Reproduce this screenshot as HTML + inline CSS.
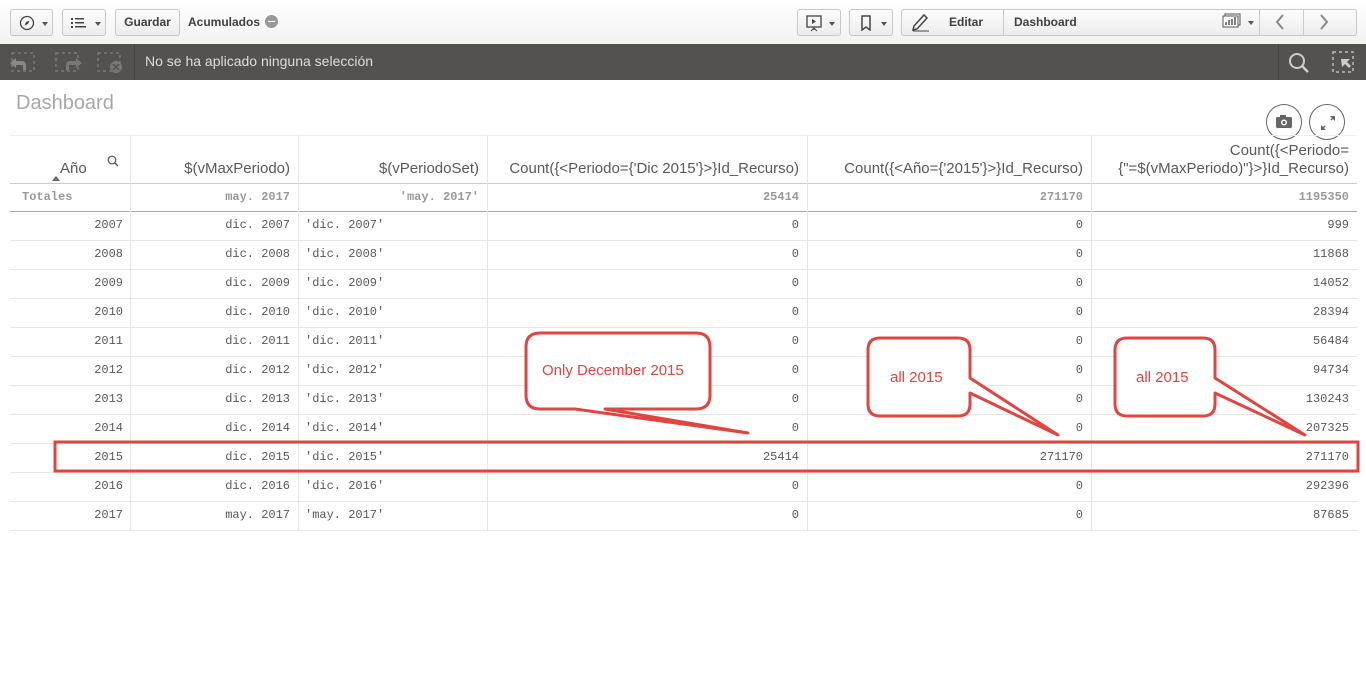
<!DOCTYPE html>
<html><head><meta charset="utf-8"><style>
*{box-sizing:border-box;margin:0;padding:0}
body{width:1366px;height:681px;background:#fff;font-family:"Liberation Sans",sans-serif;position:relative;overflow:hidden}
.a{position:absolute}
.btn{position:absolute;top:9px;height:27px;border:1px solid #c8c8c8;border-radius:3px;background:linear-gradient(#fdfdfd,#ececec)}
.bt{font-weight:bold;font-size:12px;color:#404040}
.caret{position:absolute;top:12px;width:0;height:0;border-left:3px solid transparent;border-right:3px solid transparent;border-top:4px solid #555}
.hd{position:absolute;font-size:15px;color:#595959;text-align:right}
.c{position:absolute;font-family:"Liberation Mono",monospace;font-size:12px;color:#595959;height:29px;line-height:29px;text-align:right}
.vl{position:absolute;top:135px;height:396px;width:1px;background:#e6e6e6}
.hl{position:absolute;left:10px;width:1347px;height:1px;background:#e6e6e6}
</style></head><body>
<div class="a" style="left:0;top:0;width:1366px;height:44px;background:linear-gradient(#fff,#f2f2f2)"></div>
<div class="btn" style="left:10px;width:43px"><svg class="a" style="left:8px;top:5px" width="16" height="16"><circle cx="8" cy="8" r="6.5" fill="none" stroke="#444" stroke-width="1.3"/><path d="M10.5 5.5 L7 7 L5.5 10.5 L9 9Z" fill="#444"/></svg><div class="caret" style="left:31px"></div></div>
<div class="btn" style="left:62px;width:44px"><svg class="a" style="left:8px;top:7px" width="16" height="12"><rect x="0" y="1" width="2" height="2" fill="#444"/><rect x="0" y="5" width="2" height="2" fill="#444"/><rect x="0" y="9" width="2" height="2" fill="#444"/><rect x="4" y="1" width="9" height="1.5" fill="#444"/><rect x="4" y="5" width="9" height="1.5" fill="#444"/><rect x="4" y="9" width="11" height="1.5" fill="#444"/></svg><div class="caret" style="left:32px"></div></div>
<div class="btn bt" style="left:115px;width:65px;line-height:25px;text-align:center">Guardar</div>
<div class="a bt" style="left:188px;top:15px">Acumulados</div>
<div class="a" style="left:265px;top:15px;width:13px;height:13px;border-radius:50%;background:#999"><div class="a" style="left:3px;top:6px;width:7px;height:1px;background:#fff"></div></div>
<div class="btn" style="left:797px;width:44px"><svg class="a" style="left:8px;top:5px" width="16" height="17"><rect x="1" y="1" width="14" height="11" fill="none" stroke="#444" stroke-width="1.3"/><path d="M6 4 L10 6.5 L6 9Z" fill="#444"/><path d="M8 12 V15 M5 16 L8 13 L11 16" stroke="#444" fill="none"/></svg><div class="caret" style="left:31px"></div></div>
<div class="btn" style="left:849px;width:44px"><svg class="a" style="left:10px;top:5px" width="12" height="16"><path d="M2 1 H10 V15 L6 12 L2 15Z" fill="none" stroke="#444" stroke-width="1.5"/></svg><div class="caret" style="left:31px"></div></div>
<div class="btn" style="left:901px;width:456px"></div>
<div class="a" style="left:1003px;top:10px;width:1px;height:25px;background:#ccc"></div>
<div class="a" style="left:1259px;top:10px;width:1px;height:25px;background:#ccc"></div>
<div class="a" style="left:1303px;top:10px;width:1px;height:25px;background:#ccc"></div>
<svg class="a" style="left:911px;top:12px" width="20" height="20"><path d="M3 14 L13 3 L16 6 L6 17 L2 18Z" fill="none" stroke="#444" stroke-width="1.5"/><path d="M2 19 H18" stroke="#444"/></svg>
<div class="a bt" style="left:949px;top:15px">Editar</div>
<div class="a bt" style="left:1014px;top:15px">Dashboard</div>
<svg class="a" style="left:1222px;top:13px" width="20" height="16"><rect x="3" y="1" width="15" height="11" fill="none" stroke="#555"/><rect x="1" y="3" width="15" height="11" fill="#fff" stroke="#555"/><path d="M4 12V9M7 12V7M10 12V6M13 12V4" stroke="#555" stroke-width="1.5"/></svg>
<div class="caret" style="left:1248px;top:21px"></div>
<svg class="a" style="left:1273px;top:13px" width="14" height="18"><path d="M10 2 L4 9 L10 16" fill="none" stroke="#888" stroke-width="2"/></svg>
<svg class="a" style="left:1317px;top:13px" width="14" height="18"><path d="M4 2 L10 9 L4 16" fill="none" stroke="#888" stroke-width="2"/></svg>

<div class="a" style="left:0;top:44px;width:1366px;height:36px;background:#53524f"></div>
<div class="a" style="left:134px;top:44px;width:1px;height:36px;background:#454441"></div>
<div class="a" style="left:1278px;top:44px;width:1px;height:36px;background:#454441"></div>
<svg class="a" style="left:8px;top:51px" width="120" height="22"><g fill="none" stroke="#777" stroke-width="1.5" stroke-dasharray="3 3"><rect x="4" y="2" width="22" height="18"/><rect x="48" y="2" width="22" height="18"/><rect x="90" y="2" width="22" height="18"/></g><path d="M2 12 L8 7 V10 H14 Q18 10 18 15 V19 H15 V14 H8 V17Z" fill="#888"/><path d="M74 12 L68 7 V10 H62 Q58 10 58 15 V19 H61 V14 H68 V17Z" fill="#777"/><circle cx="108" cy="16" r="6" fill="#777"/><path d="M105 13 L111 19 M111 13 L105 19" stroke="#53524f" stroke-width="1.5"/></svg>
<div class="a" style="left:145px;top:53px;font-size:14px;color:#ddd">No se ha aplicado ninguna selección</div>
<svg class="a" style="left:1288px;top:52px" width="22" height="22"><circle cx="9" cy="9" r="7" fill="none" stroke="#ccc" stroke-width="2"/><path d="M14 14 L20 20" stroke="#ccc" stroke-width="2.5"/></svg>
<svg class="a" style="left:1332px;top:51px" width="24" height="22"><rect x="1" y="1" width="20" height="20" fill="none" stroke="#bbb" stroke-width="1.5" stroke-dasharray="3 3"/><path d="M9 8 H18 L15 11 L19 15 L17 17 L13 13 L10 16Z" fill="#ccc"/></svg>

<div class="a" style="left:16px;top:92px;font-size:20px;color:#a8a8a8">Dashboard</div>
<div class="a" style="left:1266px;top:104px;width:36px;height:36px;border:1.5px solid #666;border-radius:50%"><svg class="a" style="left:9px;top:10px" width="16" height="13"><rect x="0" y="2" width="16" height="11" rx="1.5" fill="#666"/><rect x="4" y="0" width="6" height="3" fill="#666"/><circle cx="8" cy="7.5" r="3" fill="#fff"/><circle cx="8" cy="7.5" r="1.6" fill="#666"/></svg></div>
<div class="a" style="left:1309px;top:104px;width:36px;height:36px;border:1.5px solid #666;border-radius:50%"><svg class="a" style="left:9px;top:9px" width="18" height="18"><path d="M11 2 H16 V7Z M7 16 H2 V11Z" fill="#666"/><path d="M15 3 L12 6 M3 15 L6 12" stroke="#666" stroke-width="1.5"/></svg></div>

<div class="hl" style="top:135px;background:#eee"></div>
<div class="hl" style="top:183px;background:#ccc"></div>
<div class="hl" style="top:211px;background:#aaa"></div>
<div class="hl" style="top:240px"></div><div class="hl" style="top:269px"></div><div class="hl" style="top:298px"></div><div class="hl" style="top:327px"></div><div class="hl" style="top:356px"></div><div class="hl" style="top:385px"></div><div class="hl" style="top:414px"></div><div class="hl" style="top:443px"></div><div class="hl" style="top:472px"></div><div class="hl" style="top:501px"></div><div class="hl" style="top:530px"></div>
<div class="vl" style="left:130px"></div><div class="vl" style="left:298px"></div><div class="vl" style="left:487px"></div><div class="vl" style="left:807px"></div><div class="vl" style="left:1091px"></div>

<div class="hd" style="left:60px;top:160px">Año</div>
<div class="a" style="left:52px;top:176px;border-left:4px solid transparent;border-right:4px solid transparent;border-bottom:5px solid #666"></div>
<svg class="a" style="left:107px;top:155px" width="12" height="12"><circle cx="5" cy="5" r="3.8" fill="none" stroke="#555" stroke-width="1.2"/><path d="M8 8 L11 11" stroke="#555" stroke-width="1.4"/></svg>
<div class="hd" style="left:130px;width:160px;top:160px">$(vMaxPeriodo)</div>
<div class="hd" style="left:298px;width:181px;top:160px">$(vPeriodoSet)</div>
<div class="hd" style="left:487px;width:312px;top:160px">Count({&lt;Periodo={'Dic 2015'}&gt;}Id_Recurso)</div>
<div class="hd" style="left:807px;width:276px;top:160px">Count({&lt;Año={'2015'}&gt;}Id_Recurso)</div>
<div class="hd" style="left:1091px;width:258px;top:142px;line-height:18px">Count({&lt;Periodo=<br>{"=$(vMaxPeriodo)"}&gt;}Id_Recurso)</div>

<div class="c" style="left:22px;top:183px;font-weight:bold;color:#999;text-align:left">Totales</div>
<div class="c" style="left:130px;width:160px;top:183px;font-weight:bold;color:#999">may. 2017</div>
<div class="c" style="left:298px;width:181px;top:183px;font-weight:bold;color:#999">'may. 2017'</div>
<div class="c" style="left:487px;width:312px;top:183px;font-weight:bold;color:#999">25414</div>
<div class="c" style="left:807px;width:276px;top:183px;font-weight:bold;color:#999">271170</div>
<div class="c" style="left:1091px;width:258px;top:183px;font-weight:bold;color:#999">1195350</div>

<div id="rows"></div>
<script>
var d=[["2007","dic. 2007",0,0,999],["2008","dic. 2008",0,0,11868],["2009","dic. 2009",0,0,14052],["2010","dic. 2010",0,0,28394],["2011","dic. 2011",0,0,56484],["2012","dic. 2012",0,0,94734],["2013","dic. 2013",0,0,130243],["2014","dic. 2014",0,0,207325],["2015","dic. 2015",25414,271170,271170],["2016","dic. 2016",0,0,292396],["2017","may. 2017",0,0,87685]];
var h="";d.forEach(function(r,i){var t=211+i*29;
h+='<div class="c" style="left:10px;width:113px;top:'+t+'px">'+r[0]+'</div>'+
'<div class="c" style="left:130px;width:160px;top:'+t+'px">'+r[1]+'</div>'+
'<div class="c" style="left:305px;top:'+t+'px;text-align:left">\''+r[1]+'\'</div>'+
'<div class="c" style="left:487px;width:312px;top:'+t+'px">'+r[2]+'</div>'+
'<div class="c" style="left:807px;width:276px;top:'+t+'px">'+r[3]+'</div>'+
'<div class="c" style="left:1091px;width:258px;top:'+t+'px">'+r[4]+'</div>';});
document.getElementById("rows").innerHTML=h;
</script>

<svg class="a" style="left:0;top:0" width="1366" height="681">
<g fill="#fff" stroke="#e0453f" stroke-width="3" stroke-linejoin="round">
<path d="M540 333 H696 Q710 333 710 347 V395 Q710 409 696 409 H605 L748 433 L575 409 H540 Q526 409 526 395 V347 Q526 333 540 333Z"/>
<path d="M880 338 H958 Q970 338 970 350 V378 L1058 435 L970 393 V404 Q970 416 958 416 H880 Q868 416 868 404 V350 Q868 338 880 338Z"/>
<path d="M1127 338 H1203 Q1215 338 1215 350 V378 L1305 435 L1215 393 V404 Q1215 416 1203 416 H1127 Q1115 416 1115 404 V350 Q1115 338 1127 338Z"/>
</g>
<rect x="55" y="442" width="1303" height="29" fill="none" stroke="#e0453f" stroke-width="3"/>
<g fill="#e0453f" font-family="Liberation Sans Narrow, Liberation Sans, sans-serif" font-size="15">
<text x="542" y="375">Only December 2015</text><text x="890" y="382">all 2015</text><text x="1136" y="382">all 2015</text></g>
</svg>
</body></html>
